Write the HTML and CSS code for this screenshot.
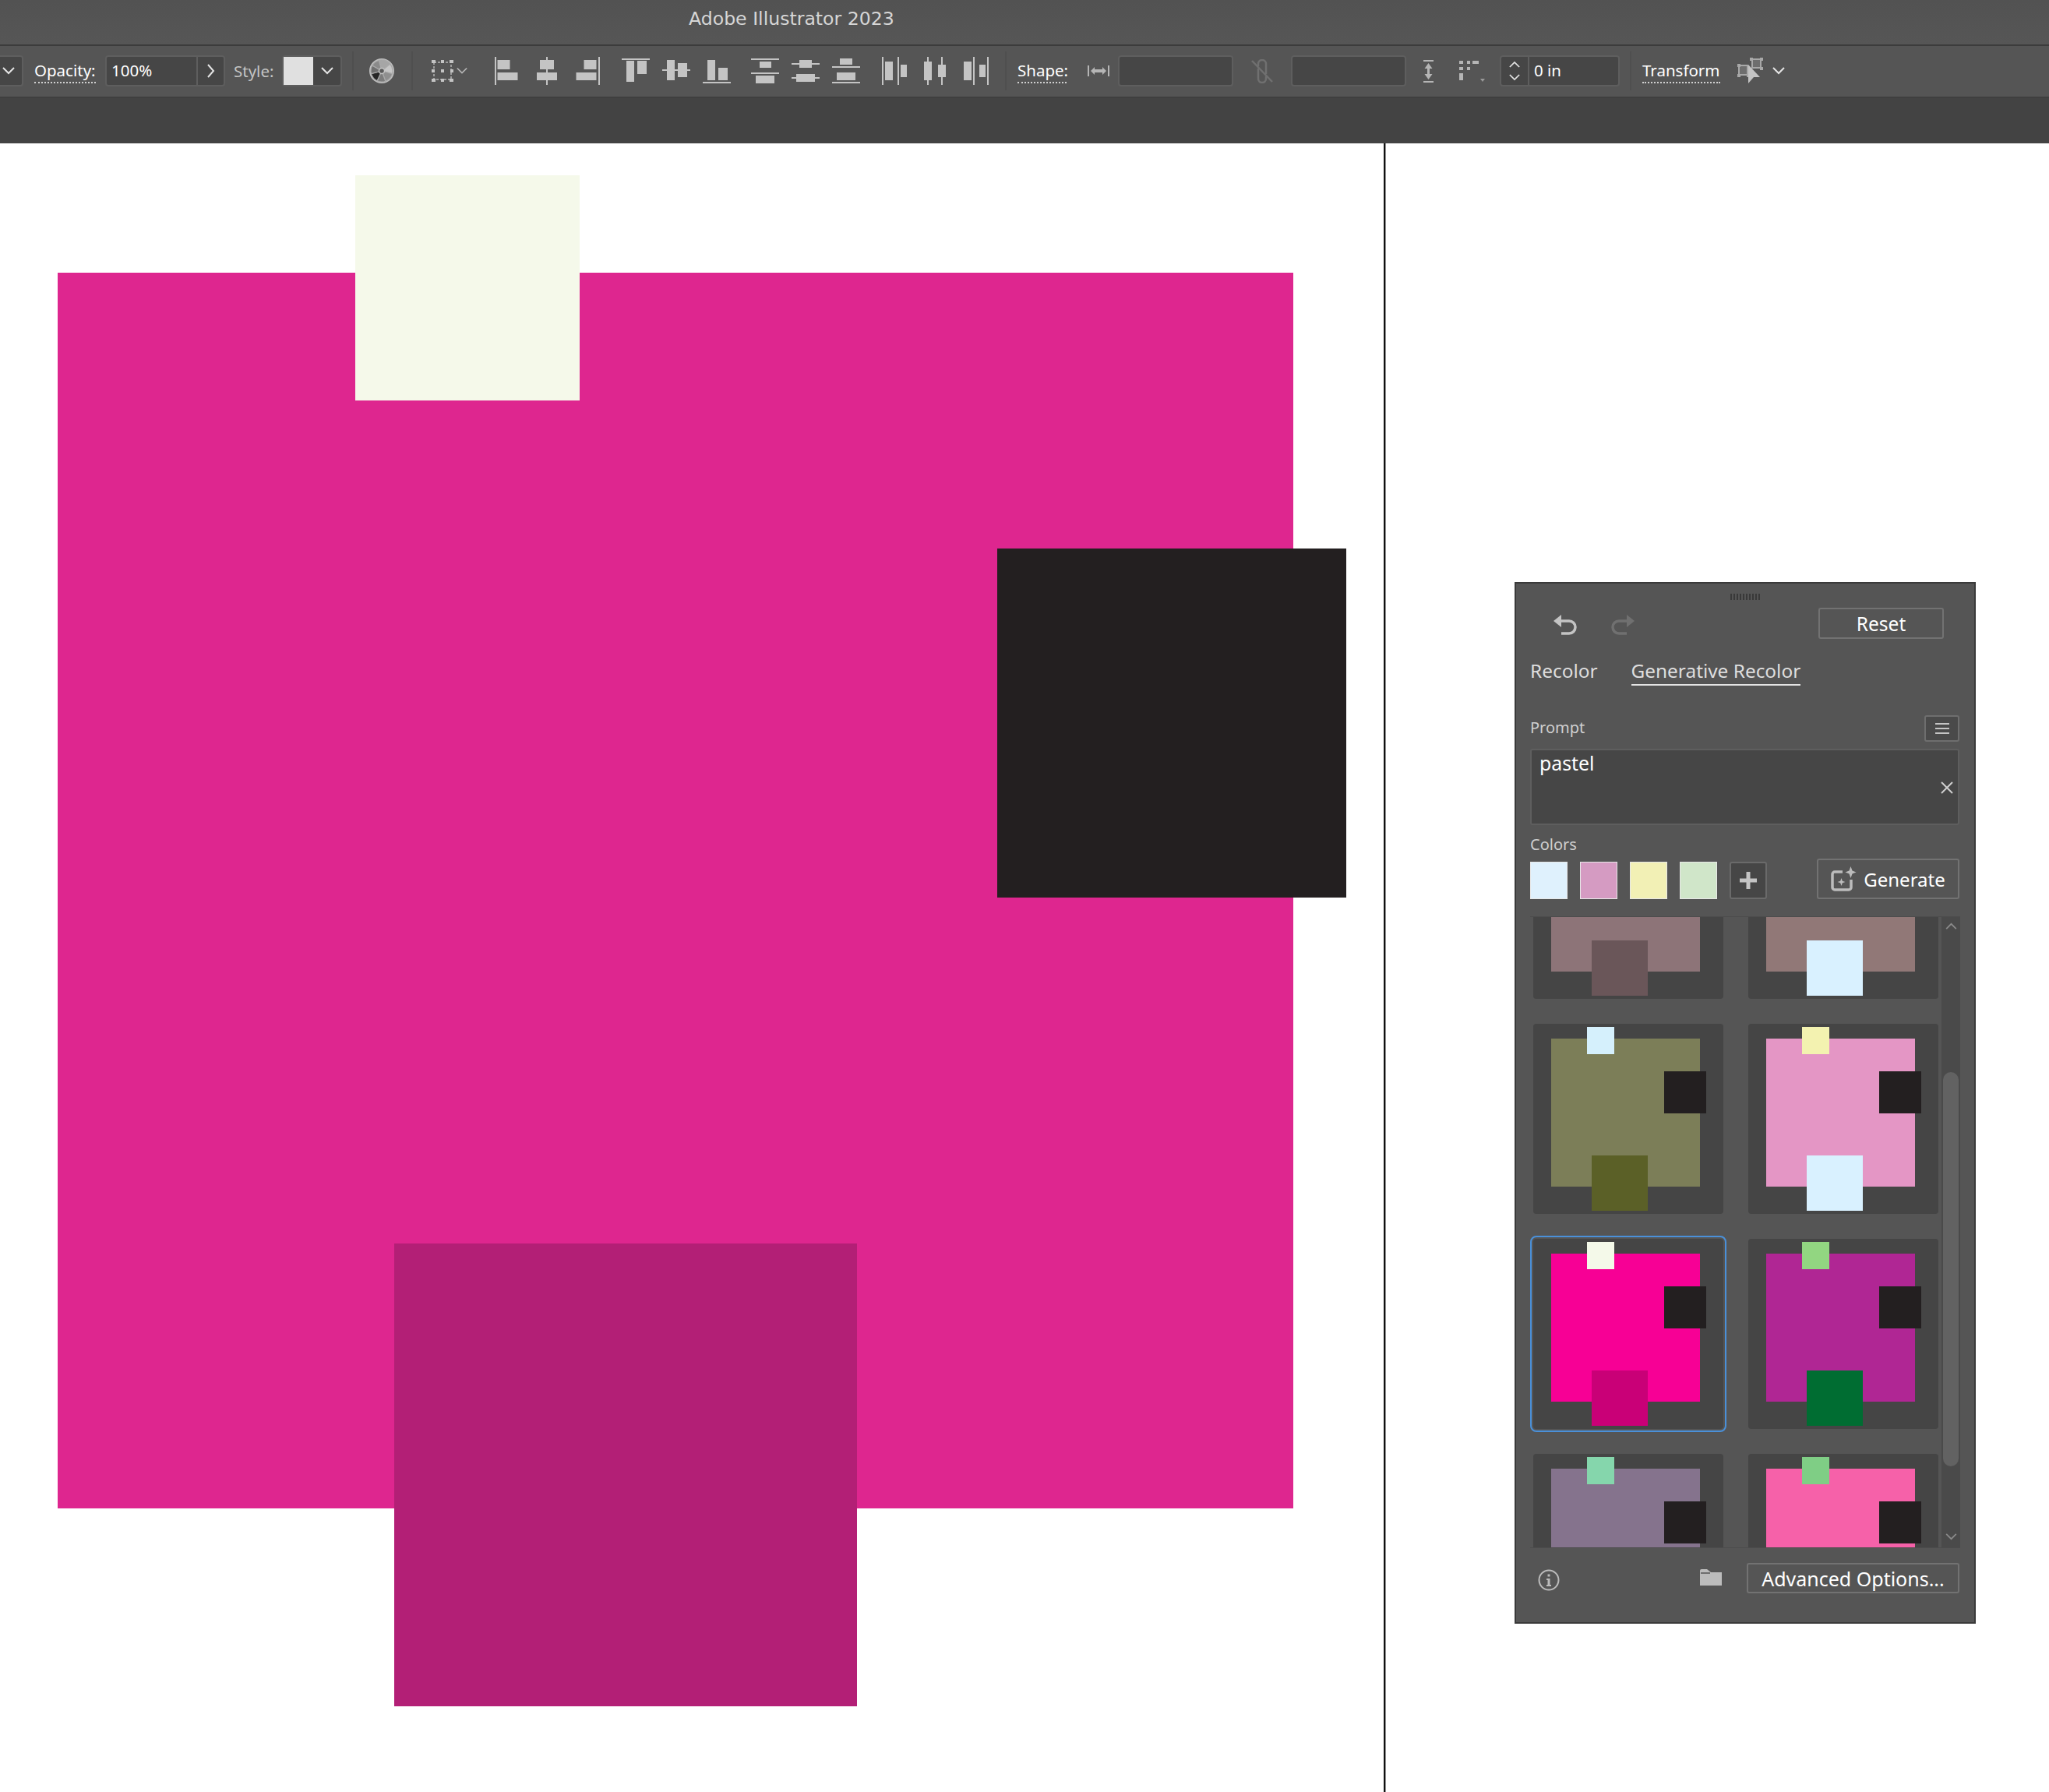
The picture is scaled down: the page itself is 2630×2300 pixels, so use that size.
FILE: index.html
```html
<!DOCTYPE html>
<html lang="en">
<head>
    <meta charset="UTF-8">
    <title>Adobe Illustrator 2023</title>
    <link rel="stylesheet" href="styles.css">
</head>
<body>
    <header class="titlebar">Adobe Illustrator 2023</header>

    <div class="toolbar">
        <div class="field field-edge"><svg class="chev" viewBox="0 0 16 10"><path d="M1 1l7 7 7-7"/></svg></div>

        <span class="label link-label w-opacity">Opacity:</span>
        <div class="field w-opacity-field">
            <span class="value">100%</span>
            <span class="field-btn"><svg class="chev-side" viewBox="0 0 10 18"><path d="M1 1l7 8-7 8"/></svg></span>
        </div>

        <span class="label dim w-style">Style:</span>
        <div class="field w-style-field">
            <span class="style-swatch"></span>
            <span class="field-btn-plain"><svg class="chev" viewBox="0 0 16 10"><path d="M1 1l7 7 7-7"/></svg></span>
        </div>

        <span class="divider d-1"></span>

        <svg class="wheel" viewBox="0 0 32 32">
            <circle cx="16" cy="16" r="15" fill="#8d8d8d" stroke="#bfbfbf" stroke-width="2"/>
            <g stroke="#a9a9a9" stroke-width="1.200">
                <path d="M16 16L12.400 2.500A14 14 0 0 1 26.700 7Z" fill="#a6a6a6"/>
                <path d="M16 16L26.700 7A14 14 0 0 1 29.500 19.600Z" fill="#c6c6c6"/>
                <path d="M16 16L29.500 19.600A14 14 0 0 1 20.800 29.200Z" fill="#8f8f8f"/>
                <path d="M16 16L20.800 29.200A14 14 0 0 1 10.100 28.700Z" fill="#7c7c7c"/>
                <path d="M16 16L10.100 28.700A14 14 0 0 1 2.500 19.600Z" fill="#262626"/>
                <path d="M16 16L2.500 19.600A14 14 0 0 1 3.900 9Z" fill="#6f6f6f"/>
                <path d="M16 16L3.900 9A14 14 0 0 1 12.400 2.500Z" fill="#8a8a8a"/>
            </g>
            <circle cx="16" cy="16" r="3.500" fill="#5a5a5a" stroke="#c4c4c4" stroke-width="1.500"/>
        </svg>

        <span class="divider d-2"></span>

        <svg class="anchor-ico" viewBox="0 0 28 28">
            <path d="M3 3h22v22H3z" fill="none" stroke="#b5b5b5" stroke-width="1.500" stroke-dasharray="3 2"/>
            <path d="M0 0h5v4H0zM12 0h4v4h-4zM23 0h5v4h-5zM0 12h4v4H0zM12 12h4v4h-4zM24 12h4v4h-4zM0 24h5v4H0zM12 24h4v4h-4zM23 24h5v4h-5z" fill="#c4c4c4"/>
        </svg>
        <svg class="chev chev-dim" viewBox="0 0 16 10"><path d="M1 1l7 7 7-7"/></svg>

        <div class="align-groups">
            <div class="align-group">
                <span class="slot"><svg viewBox="0 0 40 40"><path d="M5 2h2v36H5zM8.500 6h16v12h-16zM8.500 22h26v10h-26z"/></svg></span>
                <span class="slot"><svg viewBox="0 0 40 40"><path d="M19 2h2v4h-2zM19 18h2v4h-2zM19 32h2v6h-2zM11 6h18v12H11zM7 22h26v10H7z"/></svg></span>
                <span class="slot"><svg viewBox="0 0 40 40"><path d="M34 2h2v36h-2zM15.500 6h16v12h-16zM5.500 22h26v10h-26z"/></svg></span>
            </div>
            <div class="align-group">
                <span class="slot"><svg viewBox="0 0 40 40"><path d="M2 4h36v2H2zM8 7h10v27H8zM22 7h12v17H22z"/></svg></span>
                <span class="slot"><svg viewBox="0 0 40 40"><path d="M2 18h6v2H2zM18 18h4v2h-4zM34 18h4v2h-4zM8 6h10v26H8zM22 10h12v18H22z"/></svg></span>
                <span class="slot"><svg viewBox="0 0 40 40"><path d="M2 34h36v2H2zM8 6h10v26H8zM22 16h12v16H22z"/></svg></span>
            </div>
            <div class="align-group">
                <span class="slot"><svg viewBox="0 0 40 40"><path d="M2 4h36v2H2zM2 22h36v2H2zM13 8h15v8H13zM8 26h24v10H8z"/></svg></span>
                <span class="slot"><svg viewBox="0 0 40 40"><path d="M2 10h10v2H2zM28 10h10v2H28zM2 28h6v2H2zM32 28h6v2h-6zM12 6h16v10H12zM8 24h24v10H8z"/></svg></span>
                <span class="slot"><svg viewBox="0 0 40 40"><path d="M2 14h36v2H2zM2 34h36v2H2zM12 4h16v8H12zM8 22h24v10H8z"/></svg></span>
            </div>
            <div class="align-group">
                <span class="slot"><svg viewBox="0 0 40 40"><path d="M4 2h2v36H4zM24 2h2v36h-2zM8 8h10v24H8zM28 12h8v16h-8z"/></svg></span>
                <span class="slot"><svg viewBox="0 0 40 40"><path d="M10 2h2v6h-2zM10 32h2v6h-2zM28 2h2v10h-2zM28 28h2v10h-2zM6 8h10v24H6zM24 12h10v16H24z"/></svg></span>
                <span class="slot"><svg viewBox="0 0 40 40"><path d="M17 2h2v36h-2zM35 2h2v36h-2zM5 8h10v24H5zM25 12h8v16h-8z"/></svg></span>
            </div>
        </div>

        <span class="divider d-3"></span>

        <span class="label link-label w-shape">Shape:</span>
        <svg class="size-ico-w" viewBox="0 0 28 14">
            <path d="M0 0h2v14H0zM26 0h2v14h-2zM4 7l5-5v3h10V2l5 5-5 5V9H9v3z" fill="#b5b5b5"/>
        </svg>
        <div class="field w-size-a"></div>
        <svg class="link-ico" viewBox="0 0 30 31">
            <path d="M2 2l26 27" stroke="#707070" stroke-width="2.500"/>
            <path d="M10 9V6a5 5 0 0 1 10 0v13M20 22v3a5 5 0 0 1-10 0V12" fill="none" stroke="#707070" stroke-width="2.500"/>
        </svg>
        <div class="field w-size-b"></div>
        <svg class="size-ico-h" viewBox="0 0 13 29">
            <path d="M0 0h13v2H0zM0 27h13v2H0zM6.500 4l5 7H8v7h3.500l-5 7-5-7H5v-7H1.500z" fill="#b5b5b5"/>
        </svg>
        <svg class="corner-ico" viewBox="0 0 34 27">
            <path d="M0 0h5v4H0zM10 0h4v4h-4zM17 0h8v4h-8zM0 8h5v4H0zM10 8h4v4h-4zM0 16h5v9H0z" fill="#b5b5b5"/>
            <path d="M27 23h6l-3 4z" fill="#9a9a9a"/>
        </svg>
        <div class="field w-stepper">
            <span class="stepper-btns">
                <svg class="chev-small" viewBox="0 0 16 10"><path d="M1 9l7-7 7 7"/></svg>
                <svg class="chev-small" viewBox="0 0 16 10"><path d="M1 1l7 7 7-7"/></svg>
            </span>
            <span class="value value-in">0 in</span>
        </div>

        <span class="divider d-4"></span>

        <span class="label link-label w-transform">Transform</span>
        <svg class="transform-ico" viewBox="0 0 33 34">
            <path d="M19 2h11v11H19zM2 10h11v12H2z" fill="#6e6e6e" stroke="#a8a8a8" stroke-width="2"/>
            <path d="M16 0h4v4h-4zM29 0h4v4h-4zM29 12h4v4h-4zM0 8h4v4H0zM0 21h4v4H0zM12 21h3v4h-3z" fill="#a8a8a8"/>
            <path d="M14 9l15 16h-8l-7 8z" fill="#c4c4c4"/>
        </svg>
        <svg class="chev chev-end" viewBox="0 0 16 10"><path d="M1 1l7 7 7-7"/></svg>
    </div>

    <div class="band"></div>

    <main class="canvas">
        <div class="artboard-line"></div>
        <div class="shape shape-main"></div>
        <div class="shape shape-top"></div>
        <div class="shape shape-dark"></div>
        <div class="shape shape-bottom"></div>

        <section class="panel">
            <div class="grip"></div>

            <div class="panel-actions">
                <svg class="history-ico" viewBox="0 0 32 26">
                    <path d="M0 8l10-8v16z" fill="#c4c4c4"/>
                    <path d="M8 8h12a8 8 0 0 1 0 16H10" fill="none" stroke="#c4c4c4" stroke-width="3.500"/>
                </svg>
                <svg class="history-ico redo" viewBox="0 0 32 26">
                    <path d="M32 8L22 0v16z" fill="#707070"/>
                    <path d="M24 8H12a8 8 0 0 0 0 16h10" fill="none" stroke="#707070" stroke-width="3.500"/>
                </svg>
                <button class="btn btn-reset">Reset</button>
            </div>

            <div class="tabs">
                <span class="tab">Recolor</span>
                <span class="tab tab-active">Generative Recolor</span>
            </div>

            <div class="prompt-head">
                <span class="small-label">Prompt</span>
                <button class="menu-btn">
                    <svg viewBox="0 0 18 14"><path d="M0 0h18v2H0zM0 6h18v2H0zM0 12h18v2H0z" fill="#c4c4c4"/></svg>
                </button>
            </div>

            <div class="prompt-box">
                <span class="prompt-text">pastel</span>
                <svg class="clear-ico" viewBox="0 0 16 16"><path d="M1 1l14 14M15 1L1 15" stroke="#cfcfcf" stroke-width="2"/></svg>
            </div>

            <div class="small-label colors-label">Colors</div>

            <div class="color-row">
                <span class="swatch sw-blue"></span>
                <span class="swatch sw-pink"></span>
                <span class="swatch sw-yellow"></span>
                <span class="swatch sw-green"></span>
                <button class="add-btn">
                    <svg viewBox="0 0 22 22"><path d="M8.500 0h5v8.500H22v5h-8.500V22h-5v-8.500H0v-5h8.500z" fill="#c4c4c4"/></svg>
                </button>
                <button class="btn btn-generate">
                    <svg class="generate-ico" viewBox="0 0 33 32">
                        <path d="M15 7H5a3 3 0 0 0-3 3v17a3 3 0 0 0 3 3h18a3 3 0 0 0 3-3V17" fill="none" stroke="#bcbcbc" stroke-width="3.500"/>
                        <path d="M25.500 0l2 5.500 5 2-5 2-2 5.500-2-5.500-5-2 5-2z" fill="#bcbcbc"/>
                        <path d="M13.500 15l1.300 3.700 3.700 1.300-3.700 1.300-1.300 3.700-1.300-3.700-3.700-1.300 3.700-1.300z" fill="#bcbcbc"/>
                    </svg>
                    Generate
                </button>
            </div>

            <div class="results">
                <div class="results-list">
                    <div class="results-grid">
                        <div class="thumb t-mauve-a"><i class="t-main"></i><i class="t-top"></i><i class="t-dark"></i><i class="t-bot"></i></div>
                        <div class="thumb t-mauve-b"><i class="t-main"></i><i class="t-top"></i><i class="t-dark"></i><i class="t-bot"></i></div>
                        <div class="thumb t-olive"><i class="t-main"></i><i class="t-top"></i><i class="t-dark"></i><i class="t-bot"></i></div>
                        <div class="thumb t-rose"><i class="t-main"></i><i class="t-top"></i><i class="t-dark"></i><i class="t-bot"></i></div>
                        <div class="thumb t-magenta selected"><i class="t-main"></i><i class="t-top"></i><i class="t-dark"></i><i class="t-bot"></i></div>
                        <div class="thumb t-purple"><i class="t-main"></i><i class="t-top"></i><i class="t-dark"></i><i class="t-bot"></i></div>
                        <div class="thumb t-grey"><i class="t-main"></i><i class="t-top"></i><i class="t-dark"></i><i class="t-bot"></i></div>
                        <div class="thumb t-hotpink"><i class="t-main"></i><i class="t-top"></i><i class="t-dark"></i><i class="t-bot"></i></div>
                    </div>
                </div>
                <div class="scroll-track">
                    <svg class="scroll-chev" viewBox="0 0 16 10"><path d="M1 9l7-7 7 7"/></svg>
                    <div class="scroll-thumb"></div>
                    <svg class="scroll-chev scroll-chev-down" viewBox="0 0 16 10"><path d="M1 1l7 7 7-7"/></svg>
                </div>
            </div>

            <div class="panel-footer">
                <svg class="info-ico" viewBox="0 0 28 28">
                    <circle cx="14" cy="14" r="12.500" fill="none" stroke="#bcbcbc" stroke-width="2"/>
                    <path d="M12.500 6.500h3v3h-3zM11 12h4.500v8H17v2h-6v-2h1.500v-6H11z" fill="#bcbcbc"/>
                </svg>
                <svg class="folder-ico" viewBox="0 0 28 22">
                    <path d="M0 3a2 2 0 0 1 2-2h7l5 4h14v17H0z" fill="#bcbcbc"/>
                    <path d="M1 6h12" stroke="#555" stroke-width="1.500"/>
                </svg>
                <button class="btn btn-advanced">Advanced Options...</button>
            </div>
        </section>
    </main>
</body>
</html>
```

FILE: styles.css
```css
*{
    margin: 0;
    padding: 0;
    box-sizing: border-box;
}

body{
    width: 2630px;
    height: 2300px;
    overflow: hidden;
    background-color: #fff;
    font-family: "Noto Sans", "Open Sans", sans-serif;
}

svg{
    display: block;
    flex-shrink: 0;
}

/* title and control bars */

.titlebar{
    height: 59px;
    padding: 6px 0 0 884px;
    border-bottom: 2px solid #3c3c3c;
    background: linear-gradient(#525252, #565656);
    color: #d6d6d6;
    font-family: "DejaVu Sans", sans-serif;
    font-size: 23.6px;
    line-height: 36px;
    white-space: nowrap;
}

.toolbar{
    display: flex;
    align-items: center;
    height: 67px;
    padding-bottom: 1px;
    border-bottom: 2px solid #3f3f3f;
    background-color: #555;
}

.band{
    height: 58px;
    background-color: #434343;
}

.label{
    flex-shrink: 0;
    color: #fff;
    font-size: 20.5px;
    line-height: 27px;
    white-space: nowrap;
}

.label.dim{
    color: #c4c4c4;
}

.link-label{
    border-bottom: 2px dotted #d0d0d0;
    margin-top: 3px;
    height: 29px;
    line-height: 25px;
}

.field{
    display: flex;
    flex-shrink: 0;
    height: 40px;
    border: 2px solid #5e5e5e;
    border-radius: 4px;
    background-color: #464646;
}

.field-edge{
    width: 30px;
    border-left: 0;
    border-radius: 0 4px 4px 0;
    align-items: center;
    padding-left: 3px;
}

.value{
    flex: 1;
    padding-left: 6px;
    color: #fff;
    font-size: 20.5px;
    line-height: 35px;
}

.field-btn{
    display: flex;
    align-items: center;
    justify-content: center;
    width: 35px;
    border-left: 2px solid #5e5e5e;
}

.field-btn-plain{
    display: flex;
    align-items: center;
    justify-content: center;
    flex: 1;
}

.chev, .chev-small{
    width: 16px;
    height: 10px;
    fill: none;
    stroke: #e4e4e4;
    stroke-width: 2;
}

.chev-side{
    width: 10px;
    height: 18px;
    fill: none;
    stroke: #e4e4e4;
    stroke-width: 2;
}

.chev-dim{
    margin-left: 4px;
    width: 14px;
    stroke: #b5b5b5;
}

.chev-end{
    margin-left: 12px;
}

.w-opacity{ width: 79px; margin-left: 14px; }
.w-opacity-field{ width: 154px; margin-left: 12px; }
.w-style{ width: 51px; margin-left: 11px; }
.w-style-field{ width: 77px; margin-left: 11px; }

.style-swatch{
    width: 38px;
    background-color: #e0e0e0;
}

.divider{
    flex-shrink: 0;
    width: 2px;
    height: 50px;
    background-color: #4f4f4f;
}

.d-1{ margin-left: 13px; }
.d-2{ margin-left: 22px; }
.d-3{ margin-left: 12px; }
.d-4{ margin-left: 13px; }

.wheel{
    width: 32px;
    height: 32px;
    margin-left: 20px;
}

.anchor-ico{
    width: 28px;
    height: 28px;
    margin-left: 24px;
}

.align-groups{
    display: flex;
    gap: 10px;
    margin-left: 24px;
}

.align-group{
    display: flex;
}

.slot{
    display: flex;
    justify-content: center;
    width: 52px;
}

.slot svg{
    width: 40px;
    height: 40px;
    fill: #c4c4c4;
}

.w-shape{ width: 63px; margin-left: 14px; }
.w-size-a{ width: 148px; margin-left: 11px; }
.w-size-b{ width: 148px; margin-left: 22px; }
.w-stepper{ width: 154px; margin-left: 18px; }
.w-transform{ width: 100px; margin-left: 14px; }

.size-ico-w{
    width: 28px;
    height: 14px;
    margin-left: 27px;
}

.link-ico{
    width: 30px;
    height: 31px;
    margin-left: 22px;
}

.size-ico-h{
    width: 13px;
    height: 29px;
    margin-left: 22px;
}

.corner-ico{
    width: 34px;
    height: 27px;
    margin-left: 33px;
}

.stepper-btns{
    display: flex;
    flex-direction: column;
    align-items: center;
    justify-content: center;
    gap: 8px;
    width: 36px;
    border-right: 2px solid #5e5e5e;
}

.chev-small{
    width: 14px;
    height: 9px;
}

.value-in{
    padding-left: 6px;
}

.transform-ico{
    width: 33px;
    height: 34px;
    margin-left: 22px;
}

/* artwork */

.canvas{
    position: relative;
    height: 2116px;
    background-color: #fff;
}

.artboard-line{
    position: absolute;
    left: 1776px;
    top: 0;
    bottom: 0;
    width: 3px;
    border-right: 1px solid #999;
    background-color: #111;
}

.shape{
    position: absolute;
}

.shape-main{
    left: 74px;
    top: 166px;
    width: 1586px;
    height: 1586px;
    background-color: #de268f;
}

.shape-top{
    left: 456px;
    top: 41px;
    width: 288px;
    height: 289px;
    background-color: #f5f9ea;
}

.shape-dark{
    left: 1280px;
    top: 520px;
    width: 448px;
    height: 448px;
    background-color: #231f20;
}

.shape-bottom{
    left: 506px;
    top: 1412px;
    width: 594px;
    height: 594px;
    background-color: #b31f76;
}

/* floating panel */

.panel{
    position: absolute;
    left: 1944px;
    top: 563px;
    display: flex;
    flex-direction: column;
    width: 592px;
    height: 1337px;
    padding: 13px 19px 0 18px;
    border: 2px solid #3a3a3a;
    background-color: #555;
    color: #fff;
}

.grip{
    align-self: center;
    width: 38px;
    height: 8px;
    background: repeating-linear-gradient(90deg, #393939 0 2px, transparent 2px 4px);
}

.panel-actions{
    display: flex;
    align-items: center;
    height: 40px;
    margin-top: 10px;
    padding: 0 20px 0 30px;
}

.history-ico{
    width: 32px;
    height: 26px;
    margin-top: 4px;
}

.history-ico.redo{
    margin-left: 40px;
}

.btn{
    display: flex;
    align-items: center;
    justify-content: center;
    flex-shrink: 0;
    border: 2px solid #727272;
    border-radius: 3px;
    background-color: #4d4d4d;
    color: #fff;
    font-family: inherit;
    font-size: 24.5px;
}

.btn-reset{
    width: 161px;
    height: 40px;
    margin-left: auto;
    background: none;
}

.tabs{
    display: flex;
    gap: 43px;
    height: 35px;
    margin-top: 25px;
}

.tab{
    color: #dedede;
    font-size: 24.4px;
    line-height: 31px;
    white-space: nowrap;
}

.tab-active{
    border-bottom: 2px solid #e4e4e4;
}

.prompt-head{
    display: flex;
    align-items: center;
    justify-content: space-between;
    height: 34px;
    margin-top: 38px;
}

.prompt-head .small-label{
    margin-bottom: 2px;
}

.small-label{
    color: #cfcfcf;
    font-size: 20px;
    line-height: 24px;
}

.menu-btn{
    display: flex;
    align-items: center;
    justify-content: center;
    width: 45px;
    height: 34px;
    border: 2px solid #6e6e6e;
    border-radius: 3px;
    background-color: #4a4a4a;
}

.menu-btn svg{
    width: 22px;
    height: 14px;
}

.prompt-box{
    position: relative;
    height: 98px;
    margin-top: 9px;
    padding: 2px 0 0 10px;
    border: 2px solid #5e5e5e;
    border-radius: 3px;
    background-color: #464646;
}

.prompt-text{
    color: #fff;
    font-size: 24.8px;
    line-height: 28px;
}

.clear-ico{
    position: absolute;
    right: 6px;
    top: 40px;
    width: 16px;
    height: 16px;
}

.colors-label{
    height: 24px;
    margin-top: 13px;
}

.color-row{
    display: flex;
    align-items: flex-end;
    gap: 16px;
    height: 52px;
    margin-top: 6px;
}

.swatch{
    width: 48px;
    height: 48px;
    border: 1px solid #e8e8e8;
}

.sw-blue{ background-color: #dff1fd; }
.sw-pink{ background-color: #d59bc2; }
.sw-yellow{ background-color: #f2f0b5; }
.sw-green{ background-color: #d0e6c9; }

.add-btn{
    display: flex;
    align-items: center;
    justify-content: center;
    width: 48px;
    height: 48px;
    border: 2px solid #6a6a6a;
    border-radius: 3px;
    background-color: #464646;
}

.add-btn svg{
    width: 22px;
    height: 22px;
}

.btn-generate{
    gap: 9px;
    width: 183px;
    height: 52px;
    margin-left: auto;
    background: none;
    font-size: 24px;
}

.generate-ico{
    width: 33px;
    height: 32px;
}

.results{
    display: flex;
    width: 552px;
    height: 811px;
    margin-top: 22px;
    border-top: 1px solid #4c4c4c;
    border-bottom: 1px solid #4c4c4c;
}

.results-list{
    flex: 1;
    overflow: hidden;
}

.results-grid{
    display: grid;
    grid-template-columns: 244px 244px;
    grid-auto-rows: 244px;
    gap: 32px;
    margin-top: -139px;
    padding-left: 4px;
}

.thumb{
    position: relative;
    border-radius: 4px;
    background-color: #454545;
}

.thumb i{
    position: absolute;
}

.t-main{ left: 23px; top: 19px; width: 191px; height: 190px; background-color: var(--main); }
.t-top{ left: 69px; top: 4px; width: 35px; height: 35px; background-color: var(--top); }
.t-dark{ left: 168px; top: 61px; width: 54px; height: 54px; background-color: #231f20; }
.t-bot{ left: 75px; top: 169px; width: 72px; height: 71px; background-color: var(--bot); }

.t-mauve-a{ --main: #8d7478; --top: #d5c6c8; --bot: #6a5659; }
.t-mauve-b{ --main: #917877; --top: #d5c6c8; --bot: #d9f1ff; }
.t-olive{ --main: #7c7e58; --top: #d5f0fc; --bot: #5b6027; }
.t-rose{ --main: #e496c5; --top: #f3f2b0; --bot: #d9f1ff; }
.t-magenta{ --main: #f70095; --top: #f4f9e9; --bot: #c90077; }
.t-purple{ --main: #b02694; --top: #92d681; --bot: #006d32; }
.t-grey{ --main: #85738d; --top: #85d6ac; --bot: #6a5a70; }
.t-hotpink{ --main: #f661a9; --top: #7fce85; --bot: #c94d8a; }

.selected{
    outline: 2px solid #4a90d9;
    outline-offset: 2px;
}

.scroll-track{
    display: flex;
    flex-direction: column;
    align-items: center;
    width: 24px;
    background-color: #4a4a4a;
}

.scroll-chev{
    width: 15px;
    height: 9px;
    margin-top: 7px;
    fill: none;
    stroke: #8a8a8a;
    stroke-width: 2;
}

.scroll-thumb{
    width: 20px;
    height: 506px;
    margin-top: 183px;
    border-radius: 10px;
    background-color: #626262;
}

.scroll-chev-down{
    margin: auto 0 9px;
}

.panel-footer{
    display: flex;
    align-items: center;
    height: 39px;
    margin-top: 19px;
    padding-left: 10px;
}

.info-ico{
    width: 28px;
    height: 28px;
    margin-top: 5px;
}

.folder-ico{
    width: 28px;
    height: 22px;
    margin: 0 32px 3px auto;
}

.btn-advanced{
    width: 273px;
    height: 39px;
    padding-top: 1px;
    background: none;
    font-size: 25px;
    white-space: nowrap;
}
```
